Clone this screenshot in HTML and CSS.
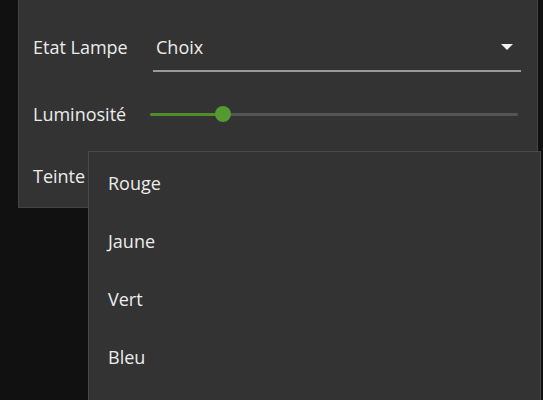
FILE: index.html
```html
<!DOCTYPE html>
<html lang="fr">
<head>
<meta charset="utf-8">
<title>Lampe</title>
<link rel="stylesheet" href="styles.css">
</head>
<body>
<div class="panel">
  <div class="row row-state">
    <div class="label">Etat Lampe</div>
    <div class="combo">
      <span class="combo-text">Choix</span>
      <span class="combo-arrow"></span>
    </div>
  </div>
  <div class="row row-light">
    <div class="label">Luminosité</div>
    <div class="slider">
      <div class="track"><div class="fill" style="width:73px"></div></div>
      <div class="thumb" style="left:73px"></div>
    </div>
  </div>
  <div class="row row-tint">
    <div class="label">Teinte</div>
  </div>
</div>
<ul class="popup">
  <li class="item">Rouge</li>
  <li class="item">Jaune</li>
  <li class="item">Vert</li>
  <li class="item">Bleu</li>
</ul>
</body>
</html>
```
FILE: styles.css
```css
html, body {
  margin: 0;
  padding: 0;
}
body {
  width: 543px;
  height: 400px;
  overflow: hidden;
  position: relative;
  background: #111111;
  font-family: "Open Sans", "Noto Sans", sans-serif;
  font-size: 18px;
  color: #ececec;
}
.panel {
  box-sizing: border-box;
  margin-left: 18px;
  width: 520px;
  height: 208px;
  background: #333333;
  border: 1px solid #444444;
  border-top: none;
  padding: 34px 0 0 14px;
}
.row {
  display: flex;
  align-items: center;
}
.label {
  width: 120px;
  flex: none;
}
.row-state {
  height: 38px;
  align-items: flex-start;
}
.row-state .label {
  line-height: 26px;
}
.combo {
  box-sizing: border-box;
  width: 368px;
  height: 38px;
  border-bottom: 2px solid #9a9a9a;
  display: flex;
  align-items: center;
  justify-content: space-between;
  padding: 0 8px 10px 3px;
}
.combo-text {
  line-height: 26px;
}
.combo-arrow {
  width: 0;
  height: 0;
  border-left: 6px solid transparent;
  border-right: 6px solid transparent;
  border-top: 6px solid #f2f2f2;
}
.row-light {
  height: 40px;
  margin-top: 22px;
}
.slider {
  position: relative;
  width: 368px;
  height: 18px;
  margin-left: -3px;
  display: flex;
  align-items: center;
}
.track {
  width: 100%;
  height: 3px;
  background: #555555;
  border-radius: 2px;
}
.fill {
  height: 100%;
  background: #4e8c2c;
  border-radius: 2px;
}
.thumb {
  position: absolute;
  top: 1px;
  width: 16px;
  height: 16px;
  margin-left: -8px;
  border-radius: 50%;
  background: #559a30;
}
.row-tint {
  height: 40px;
  margin-top: 22px;
}
.popup {
  position: absolute;
  left: 88px;
  top: 151px;
  width: 453px;
  height: 249px;
  box-sizing: border-box;
  margin: 0;
  padding: 2px 0 0 19px;
  list-style: none;
  background: #333333;
  border: 1px solid #484848;
  border-bottom: none;
  overflow: hidden;
}
.item {
  height: 58px;
  line-height: 58px;
}
```
